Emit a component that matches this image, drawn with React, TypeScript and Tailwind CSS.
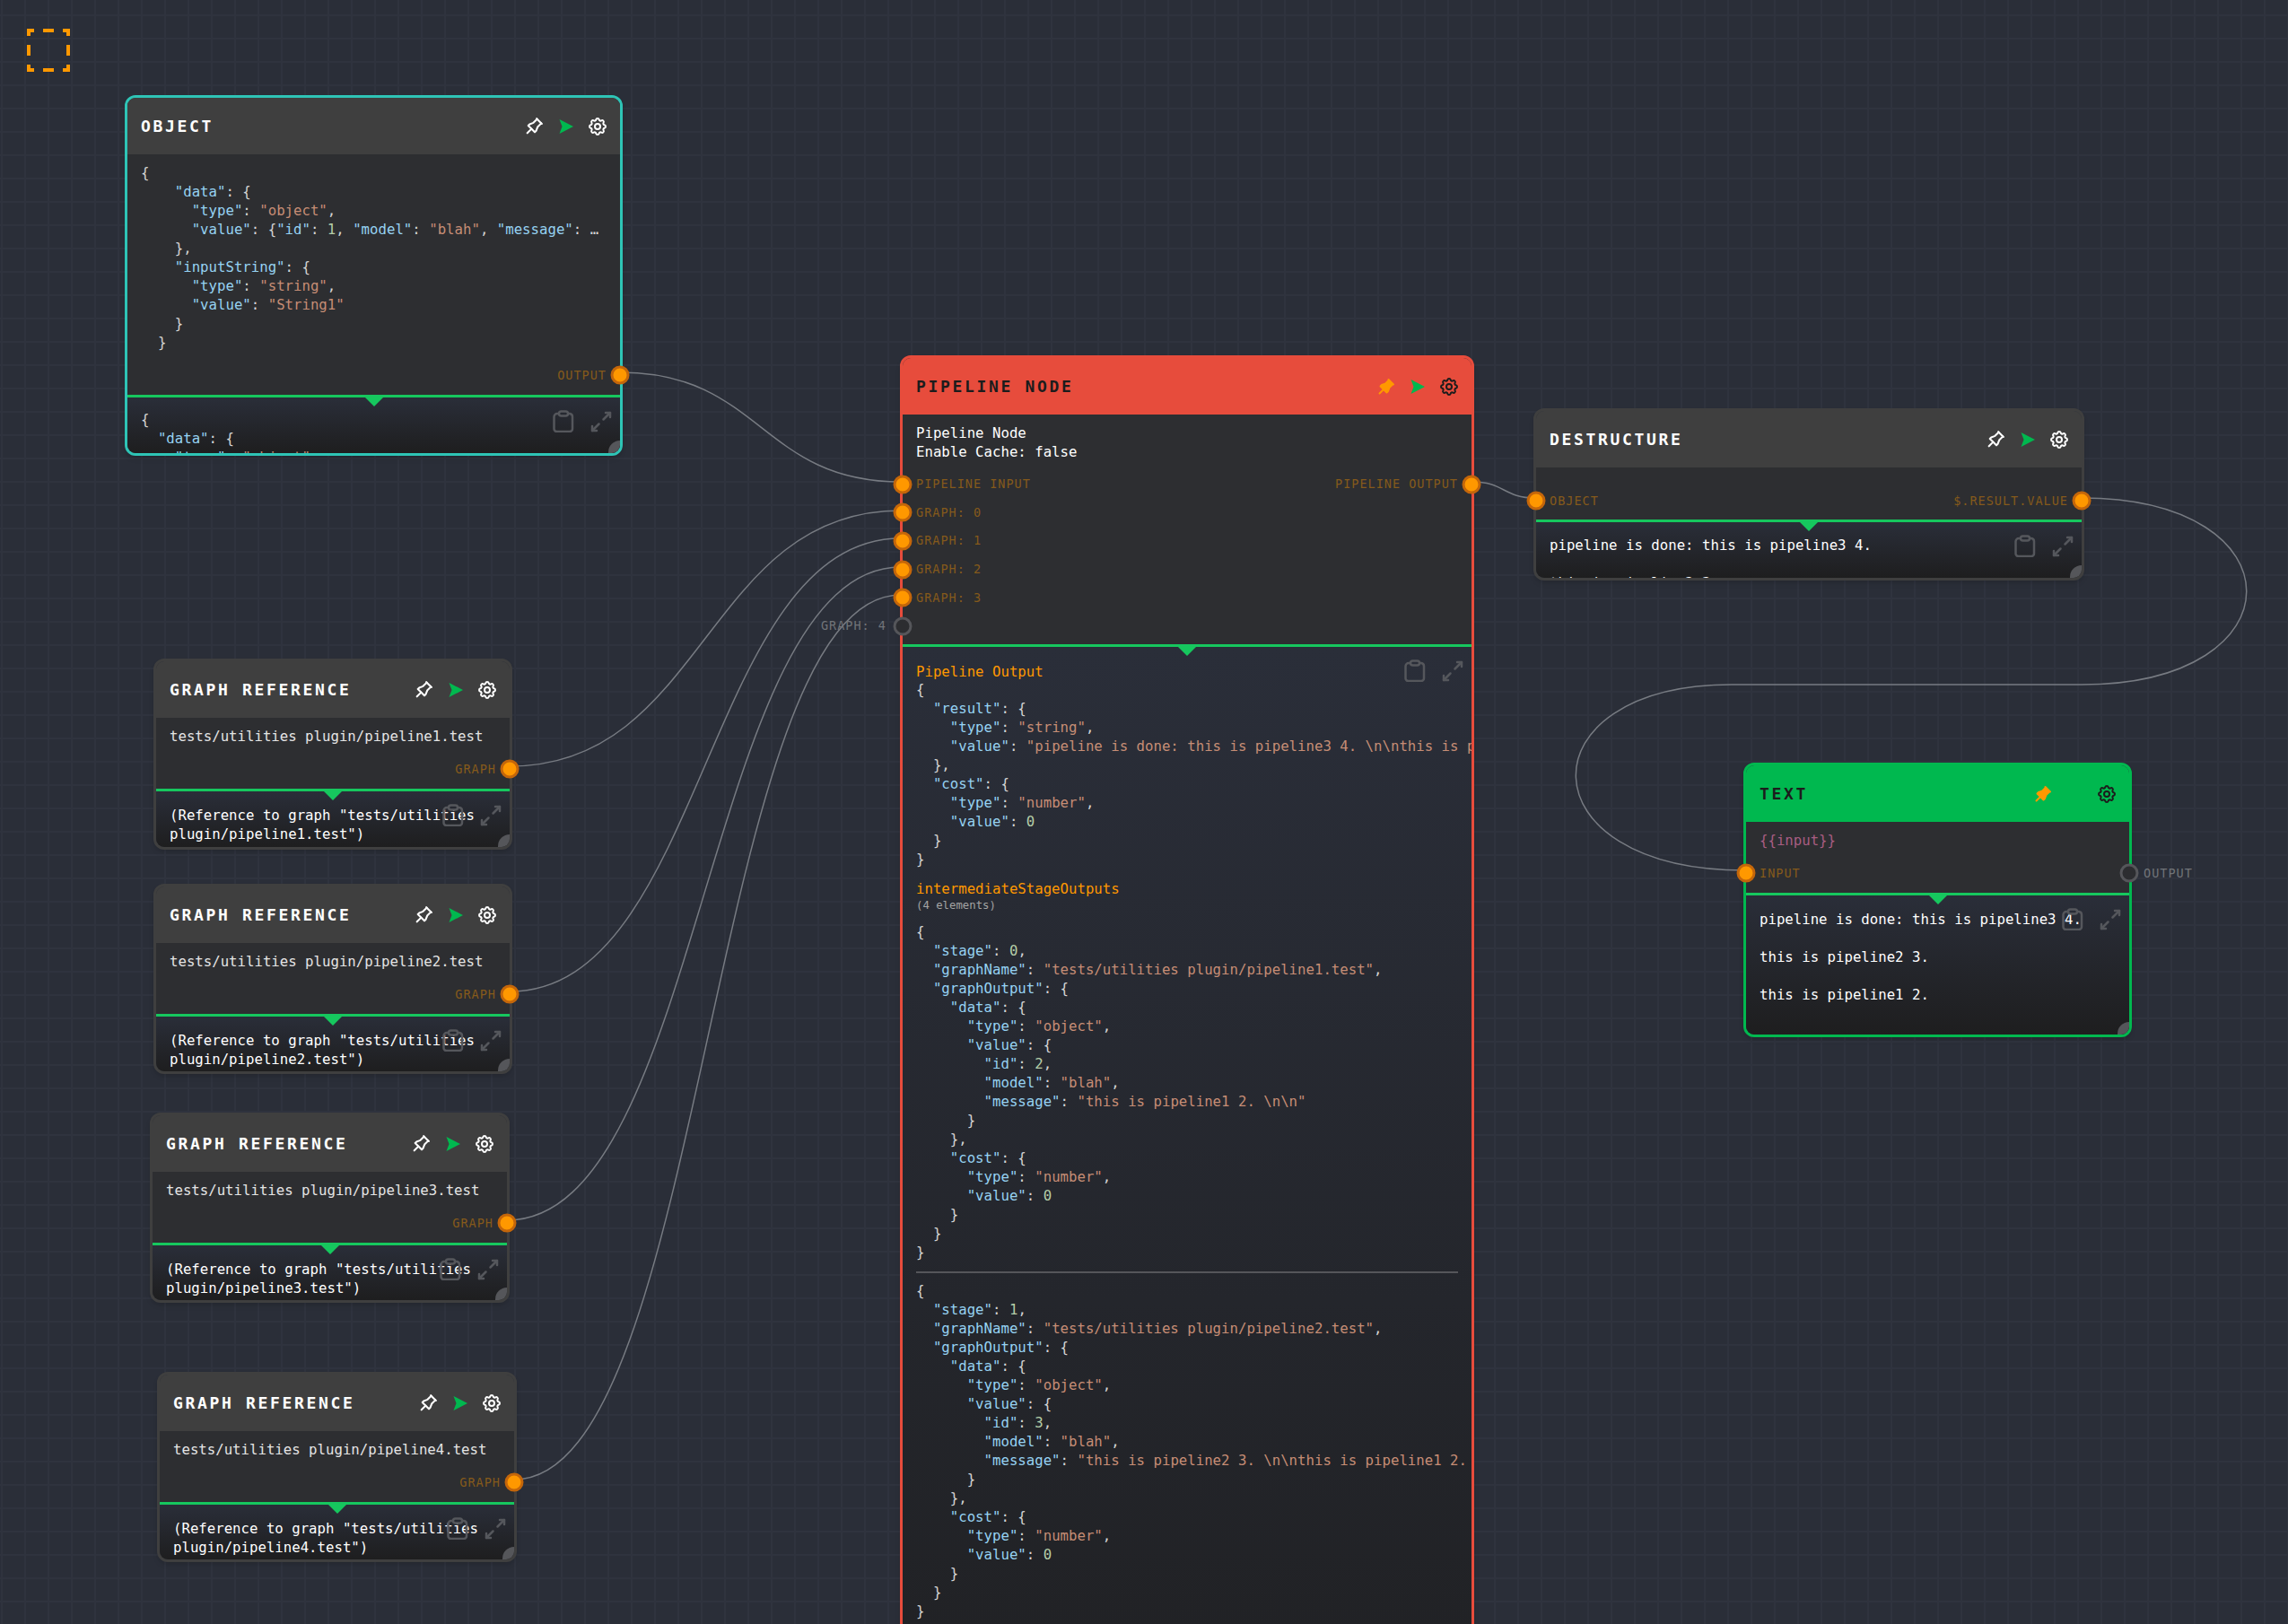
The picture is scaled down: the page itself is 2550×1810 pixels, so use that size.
import type { ReactNode } from "react";
import { TbArrowsDiagonal, TbPin, TbPinFilled, TbSettings } from "react-icons/tb";

const OBJECT_CODE = `{
    "data": {
      "type": "object",
      "value": {"id": 1, "model": "blah", "message": …
    },
    "inputString": {
      "type": "string",
      "value": "String1"
    }
  }`;

const OBJECT_OUTPUT = `{
  "data": {
    "type": "object",`;

const PIPELINE_OUTPUT = `{
  "result": {
    "type": "string",
    "value": "pipeline is done: this is pipeline3 4. \\n\\nthis is pipeline2 3. \\n\\nthis is pipeline1 2."
  },
  "cost": {
    "type": "number",
    "value": 0
  }
}`;

const stageOutput = (stage: number, id: number, message: string) => `{
  "stage": ${stage},
  "graphName": "tests/utilities plugin/pipeline${stage + 1}.test",
  "graphOutput": {
    "data": {
      "type": "object",
      "value": {
        "id": ${id},
        "model": "blah",
        "message": "${message}"
      }
    },
    "cost": {
      "type": "number",
      "value": 0
    }
  }
}`;

const RESULT_TEXT = `pipeline is done: this is pipeline3 4.

this is pipeline2 3.

this is pipeline1 2.`;

const GRAPH_REFS = [
  { n: 1, frame: "left-[171px] top-[734px] w-[400px] h-[213px]" },
  { n: 2, frame: "left-[171px] top-[985px] w-[400px] h-[212px]" },
  { n: 3, frame: "left-[167px] top-[1240px] w-[401px] h-[212px]" },
  { n: 4, frame: "left-[175px] top-[1529px] w-[401px] h-[212px]" },
];

function Json({ code }: { code: string }) {
  const parts: ReactNode[] = [];
  const pattern = /("(?:[^"\\]|\\.)*")(:)?|(\b\d+\b)/g;
  let last = 0;
  let match: RegExpExecArray | null;
  while ((match = pattern.exec(code))) {
    parts.push(code.slice(last, match.index));
    if (match[3]) {
      parts.push(<span key={match.index} className="text-[#b5cea8]">{match[3]}</span>);
    } else if (match[2]) {
      parts.push(<span key={match.index} className="text-[#96d2f2]">{match[1]}</span>, ":");
    } else {
      parts.push(<span key={match.index} className="text-[#c68d75]">{match[1]}</span>);
    }
    last = pattern.lastIndex;
  }
  parts.push(code.slice(last));
  return <pre className="font-[inherit] whitespace-pre text-[#d4d4d4]">{parts}</pre>;
}

function SendIcon() {
  return (
    <svg width="24" height="24" viewBox="0 0 24 24" className="shrink-0">
      <path d="M4.5 4 L20 12 L4.5 20 L7.5 12 Z" fill="#00b84f" />
    </svg>
  );
}

function Actions({ pinned, dark, noRun }: { pinned?: boolean; dark?: boolean; noRun?: boolean }) {
  const color = dark ? "text-[#1c1c1c]" : "text-white";
  return (
    <div className="flex items-center gap-[11px]">
      {pinned ? <TbPinFilled size={24} className="text-[#ff9800]" /> : <TbPin size={25} className={color} />}
      {noRun ? <div className="w-[25px]" /> : <SendIcon />}
      <TbSettings size={24} className={color} />
    </div>
  );
}

function Port({
  side,
  label,
  empty,
  outside,
}: {
  side: "left" | "right";
  label: string;
  empty?: boolean;
  outside?: boolean;
}) {
  const handle = empty
    ? "bg-[#2c2d30] border-[#55565a]"
    : "bg-[#ff9800] border-[#c4660a]";
  const position = side === "left" ? "-left-[15px] -translate-x-1/2" : "-right-[15px] translate-x-1/2";
  let labelClass = "text-[#855a1b]";
  if (empty) labelClass = "text-[#717478]";
  if (outside && side === "right") labelClass += " absolute left-[calc(100%+31px)]";
  if (outside && side === "left") labelClass += " absolute right-[calc(100%+33px)]";
  return (
    <>
      <span className={`whitespace-nowrap text-[13.5px] tracking-[1px] ${labelClass}`}>{label}</span>
      <span className={`absolute top-1/2 -translate-y-1/2 size-[21px] rounded-full border-[3px] ${position} ${handle}`} />
    </>
  );
}

function PortRow({ children, tall }: { children: ReactNode; tall?: boolean }) {
  return (
    <div className={`relative flex items-center justify-between ${tall ? "h-[31.6px]" : "h-[21px]"}`}>
      {children}
    </div>
  );
}

function FlowNode({
  frame,
  border,
  header,
  titleColor,
  title,
  actions,
  body,
  bodyClass,
  outputClass = "pt-[16.5px]",
  children,
}: {
  frame: string;
  border: string;
  header: string;
  titleColor: string;
  title: string;
  actions: ReactNode;
  body: ReactNode;
  bodyClass: string;
  outputClass?: string;
  children: ReactNode;
}) {
  return (
    <div className={`absolute flex flex-col rounded-[12px] border-[3px] shadow-md ${frame} ${border}`}>
      <div className={`flex h-[63px] shrink-0 items-center justify-between rounded-t-[9px] pl-[15px] pr-[13px] ${header}`}>
        <span className={`text-[18px] font-bold tracking-[2.66px] ${titleColor}`}>{title}</span>
        {actions}
      </div>
      <div className={`shrink-0 bg-[#2d2e31] px-[15px] ${bodyClass}`}>{body}</div>
      <div className="relative z-10 h-[3px] shrink-0 bg-[#16c75e]">
        <div className="absolute left-1/2 top-full h-0 w-0 -translate-x-1/2 border-x-[10px] border-t-[10px] border-x-transparent border-t-[#16c75e]" />
      </div>
      <div className={`relative min-h-0 flex-1 overflow-hidden rounded-b-[9px] bg-linear-to-b from-[#2a2e39] to-[#1e1e1f] pl-[15px] ${outputClass}`}>
        {children}
        <svg width="24" height="25" viewBox="0 0 24 25" fill="none" stroke="#55575c" strokeWidth="2.5" className="absolute right-[51px] top-[14px]">
          <path d="M7 4H5a3.5 3.5 0 0 0-3.5 3.5v13.5A3 3 0 0 0 5 24h14a3 3 0 0 0 3-3V7.5A3.5 3.5 0 0 0 19 4h-2" />
          <rect x="7" y="1.5" width="10" height="5" rx="2.5" />
        </svg>
        <TbArrowsDiagonal size={30} className="absolute right-[6px] top-[12px] text-[#55575c]" />
        <div className="absolute bottom-0 right-0 h-[14px] w-[13px] rounded-tl-full bg-[#55565a]" />
      </div>
    </div>
  );
}

export default function App() {
  return (
    <div className="relative h-[1810px] w-[2550px] overflow-hidden bg-[#2a2e38] bg-[linear-gradient(#2f333e_2px,transparent_2px),linear-gradient(90deg,#2f333e_2px,transparent_2px)] bg-[size:26px_26px] bg-[position:1px_16px] font-['DejaVu_Sans_Mono',monospace] text-[15.7px] leading-[21px] text-white">
      {/* selection tool */}
      <svg width="48" height="48" viewBox="0 0 48 48" fill="none" stroke="#ff9800" strokeWidth="4" className="absolute left-[30px] top-[32px]">
        <path d="M8 2H2V8M18 2H30M40 2H46V8M2 18V30M46 18V30M2 40V46H8M18 46H30M46 40V46H40" />
      </svg>

      {/* edges */}
      <svg width="2550" height="1810" fill="none" stroke="#777b82" strokeWidth="1.5" className="absolute left-0 top-0">
        <path d="M691 415 C848 415 848 537 1004 537" />
        <path d="M568 854 C786 854 786 569 1004 569" />
        <path d="M568 1105 C786 1105 786 600 1004 600" />
        <path d="M565 1360 C785 1360 785 632 1004 632" />
        <path d="M573 1649 C789 1649 789 663 1004 663" />
        <path d="M1641 537 C1676 537 1676 555 1711 555" />
        <path d="M2320 555 C2565 555 2565 763 2320 763 L1930 763 C1696 763 1696 970 1945 970" />
      </svg>

      <FlowNode
        frame="left-[139px] top-[106px] w-[555px] h-[402px]"
        border="border-[#2ec4b6]"
        header="bg-[#3f3f3f]"
        titleColor="text-white"
        title="OBJECT"
        actions={<Actions />}
        bodyClass="pt-[9.5px] pb-[11px]"
        outputClass="pt-[14.5px]"
        body={
          <>
            <Json code={OBJECT_CODE} />
            <div className="mt-[16px]">
              <PortRow>
                <span />
                <Port side="right" label="OUTPUT" />
              </PortRow>
            </div>
          </>
        }
      >
        <Json code={OBJECT_OUTPUT} />
      </FlowNode>

      {GRAPH_REFS.map((ref) => (
        <FlowNode
          key={ref.n}
          frame={ref.frame}
          border="border-[#3f3f3f]"
          header="bg-[#3f3f3f]"
          titleColor="text-white"
          title="GRAPH REFERENCE"
          actions={<Actions />}
          bodyClass="pt-[10px] pb-[11px]"
          body={
            <>
              <div className="text-[#e4e4e4]">{`tests/utilities plugin/pipeline${ref.n}.test`}</div>
              <div className="mt-[15.5px]">
                <PortRow>
                  <span />
                  <Port side="right" label="GRAPH" />
                </PortRow>
              </div>
            </>
          }
        >
          <div className="pr-[18px]">{`(Reference to graph "tests/utilities plugin/pipeline${ref.n}.test")`}</div>
        </FlowNode>
      ))}

      <FlowNode
        frame="left-[1003px] top-[396px] w-[640px] h-[1800px]"
        border="border-[#e74c3c]"
        header="bg-[#e74c3c]"
        titleColor="text-[#1c1c1c]"
        title="PIPELINE NODE"
        actions={<Actions pinned dark />}
        bodyClass="pt-[10px] pb-[4.7px]"
        body={
          <>
            <div>Pipeline Node</div>
            <div>Enable Cache: false</div>
            <div className="mt-[10px]">
              <PortRow tall>
                <Port side="left" label="PIPELINE INPUT" />
                <Port side="right" label="PIPELINE OUTPUT" />
              </PortRow>
              {[0, 1, 2, 3].map((i) => (
                <PortRow tall key={i}>
                  <Port side="left" label={`GRAPH: ${i}`} />
                </PortRow>
              ))}
              <PortRow tall>
                <Port side="left" label="GRAPH: 4" empty outside />
              </PortRow>
            </div>
          </>
        }
      >
        <div className="h-[20.5px] pt-[2px] leading-[18px] text-[#ff9800]">Pipeline Output</div>
        <Json code={PIPELINE_OUTPUT} />
        <div className="mt-[13px] h-[20px] leading-[20px] text-[#ff9800]">intermediateStageOutputs</div>
        <div className="h-[16px] text-[12.3px] leading-[16px] text-[#a3a3a3]">(4 elements)</div>
        <div className="mt-[10.5px]">
          <Json code={stageOutput(0, 2, "this is pipeline1 2. \\n\\n")} />
        </div>
        <div className="mr-[15px] mt-[11px] h-[2px] bg-[#55565a]" />
        <div className="mt-[9px]">
          <Json code={stageOutput(1, 3, "this is pipeline2 3. \\n\\nthis is pipeline1 2. \\n\\n")} />
        </div>
      </FlowNode>

      <FlowNode
        frame="left-[1709px] top-[455px] w-[614px] h-[192px]"
        border="border-[#3f3f3f]"
        header="bg-[#3f3f3f]"
        titleColor="text-white"
        title="DESTRUCTURE"
        actions={<Actions />}
        bodyClass="pt-[26.5px] pb-[10px]"
        outputClass="pt-[15px]"
        body={
          <PortRow>
            <Port side="left" label="OBJECT" />
            <Port side="right" label="$.RESULT.VALUE" />
          </PortRow>
        }
      >
        <pre className="font-[inherit]">{RESULT_TEXT}</pre>
      </FlowNode>

      <FlowNode
        frame="left-[1943px] top-[850px] w-[433px] h-[306px]"
        border="border-[#00b84f]"
        header="bg-[#00b84f]"
        titleColor="text-[#1c1c1c]"
        title="TEXT"
        actions={<Actions pinned dark noRun />}
        bodyClass="pt-[10px] pb-[11px]"
        body={
          <>
            <div className="text-[#a85d82]">{"{{input}}"}</div>
            <div className="mt-[15.5px]">
              <PortRow>
                <Port side="left" label="INPUT" />
                <Port side="right" label="OUTPUT" empty outside />
              </PortRow>
            </div>
          </>
        }
      >
        <pre className="font-[inherit]">{RESULT_TEXT}</pre>
      </FlowNode>
    </div>
  );
}
